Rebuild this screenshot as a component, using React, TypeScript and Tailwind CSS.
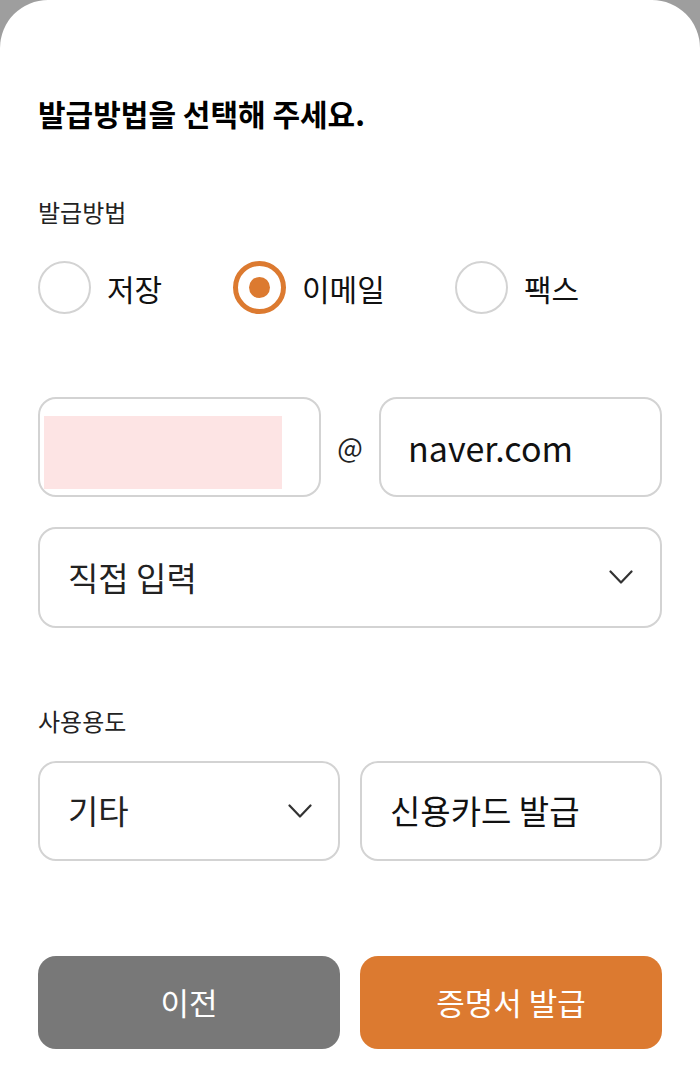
import React, { useState } from 'react';

const FONT = '"Noto Sans CJK KR", "Noto Sans", sans-serif';

const Chevron: React.FC = () => (
  <svg width="24" height="15" viewBox="0 0 24 15" fill="none">
    <polyline points="1.5,1.5 12,12.5 22.5,1.5" stroke="#333" strokeWidth="2.2" strokeLinecap="round" strokeLinejoin="round" />
  </svg>
);

const Radio: React.FC<{ label: string; checked: boolean; onClick: () => void }> = ({ label, checked, onClick }) => (
  <button onClick={onClick} className="flex items-center gap-[16px]">
    {checked ? (
      <span className="w-[53px] h-[53px] rounded-full border-[5px] border-[#dc7a30] flex items-center justify-center">
        <span className="w-[21px] h-[21px] rounded-full bg-[#dc7a30]" />
      </span>
    ) : (
      <span className="w-[53px] h-[53px] rounded-full border-2 border-[#d3d3d3]" />
    )}
    <span className="text-[30px] leading-[40px] text-[#111]">{label}</span>
  </button>
);

export default function App() {
  const [method, setMethod] = useState('email');

  return (
    <div className="min-h-[1065px] bg-[#9e9e9e]" style={{ fontFamily: FONT }}>
      <div className="min-h-[1065px] bg-white rounded-t-[48px] px-[38px] pt-[93px] pb-[17px] flex flex-col">
        {/* Title */}
        <h1 className="text-[30px] leading-[40px] font-bold text-black">
          발급방법을 선택해 주세요.
        </h1>

        {/* 발급방법 */}
        <div className="mt-[64px] text-[24px] leading-[30px] text-[#222]">발급방법</div>
        <div className="mt-[34px] flex items-center h-[53px]">
          <div className="w-[195px]">
            <Radio label="저장" checked={method === 'save'} onClick={() => setMethod('save')} />
          </div>
          <div className="w-[222px]">
            <Radio label="이메일" checked={method === 'email'} onClick={() => setMethod('email')} />
          </div>
          <Radio label="팩스" checked={method === 'fax'} onClick={() => setMethod('fax')} />
        </div>

        {/* Email */}
        <div className="mt-[83px] grid grid-cols-[1fr_58px_1fr] h-[100px]">
          <div className="rounded-[18px] border-2 border-[#d3d3d3] pl-[4px] pt-[17px]">
            <div className="w-[238px] h-[73px] bg-[#fde4e4]" />
          </div>
          <div className="flex items-center justify-center text-[27px] text-[#222]">@</div>
          <div className="rounded-[18px] border-2 border-[#d3d3d3] flex items-center pl-[27px] text-[34px] text-[#111]">
            naver.com
          </div>
        </div>

        <div className="mt-[30px] h-[101px] rounded-[18px] border-2 border-[#d3d3d3] flex items-center justify-between pl-[28px] pr-[27px]">
          <span className="text-[33px] text-[#222]">직접 입력</span>
          <Chevron />
        </div>

        {/* 사용용도 */}
        <div className="mt-[78px] text-[24px] leading-[30px] text-[#222]">사용용도</div>
        <div className="mt-[25px] grid grid-cols-2 gap-[20px] h-[100px]">
          <div className="rounded-[18px] border-2 border-[#d3d3d3] flex items-center justify-between pl-[28px] pr-[26px]">
            <span className="text-[33px] text-[#222]">기타</span>
            <Chevron />
          </div>
          <div className="rounded-[18px] border-2 border-[#d3d3d3] flex items-center pl-[28px]">
            <span className="text-[33px] text-[#111]">신용카드 발급</span>
          </div>
        </div>

        {/* Buttons */}
        <div className="mt-[95px] grid grid-cols-2 gap-[20px] h-[93px]">
          <button className="rounded-[18px] bg-[#787878] text-white text-[31px]">이전</button>
          <button className="rounded-[18px] bg-[#dc7a30] text-white text-[31px]">증명서 발급</button>
        </div>
      </div>
    </div>
  );
}
